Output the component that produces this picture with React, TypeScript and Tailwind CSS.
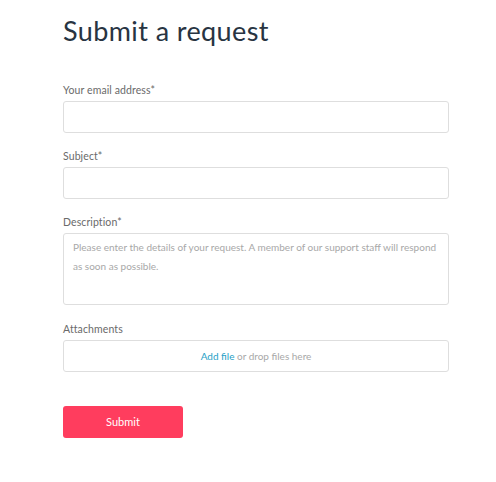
export default function App() {
  const label = "block h-[14px] text-[10.5px] leading-[14px] tracking-[0.1px] text-[#6a6a6a]";
  const box = "mt-[4px] block w-full rounded-[3px] border border-[#dedede] bg-white outline-none";

  return (
    <main className="min-h-[482px] bg-white font-['Lato',sans-serif]">
      <form className="w-[449px] pl-[63px] pt-[15px]" onSubmit={(e) => e.preventDefault()}>
        <h1 className="h-[32px] text-[27px] font-normal leading-[32px] tracking-[0.4px] text-[#283442]">
          Submit a request
        </h1>

        <div className="mt-[36px]">
          <label className={label}>Your email address*</label>
          <input type="email" className={`${box} h-[32px] px-[10px] text-[11px]`} />
        </div>

        <div className="mt-[16px]">
          <label className={label}>Subject*</label>
          <input type="text" className={`${box} h-[32px] px-[10px] text-[11px]`} />
        </div>

        <div className="mt-[16px]">
          <label className={label}>Description*</label>
          <textarea
            className={`${box} h-[72px] resize-none px-[9px] pt-[4px] text-[10px] leading-[19px] placeholder:text-[#a8a8a8]`}
            placeholder="Please enter the details of your request. A member of our support staff will respond as soon as possible."
          />
        </div>

        <div className="mt-[17px]">
          <label className={label}>Attachments</label>
          <div className={`${box} flex h-[32px] items-center justify-center text-[10px] text-[#a8a8a8]`}>
            <span>
              <a href="#" className="text-[#1f9fc6]">Add file</a> or drop files here
            </span>
          </div>
        </div>

        <button
          type="submit"
          className="mt-[34px] h-[32px] w-[120px] rounded-[3px] bg-[#ff3d5e] text-[11px] text-white"
        >
          Submit
        </button>
      </form>
    </main>
  );
}
